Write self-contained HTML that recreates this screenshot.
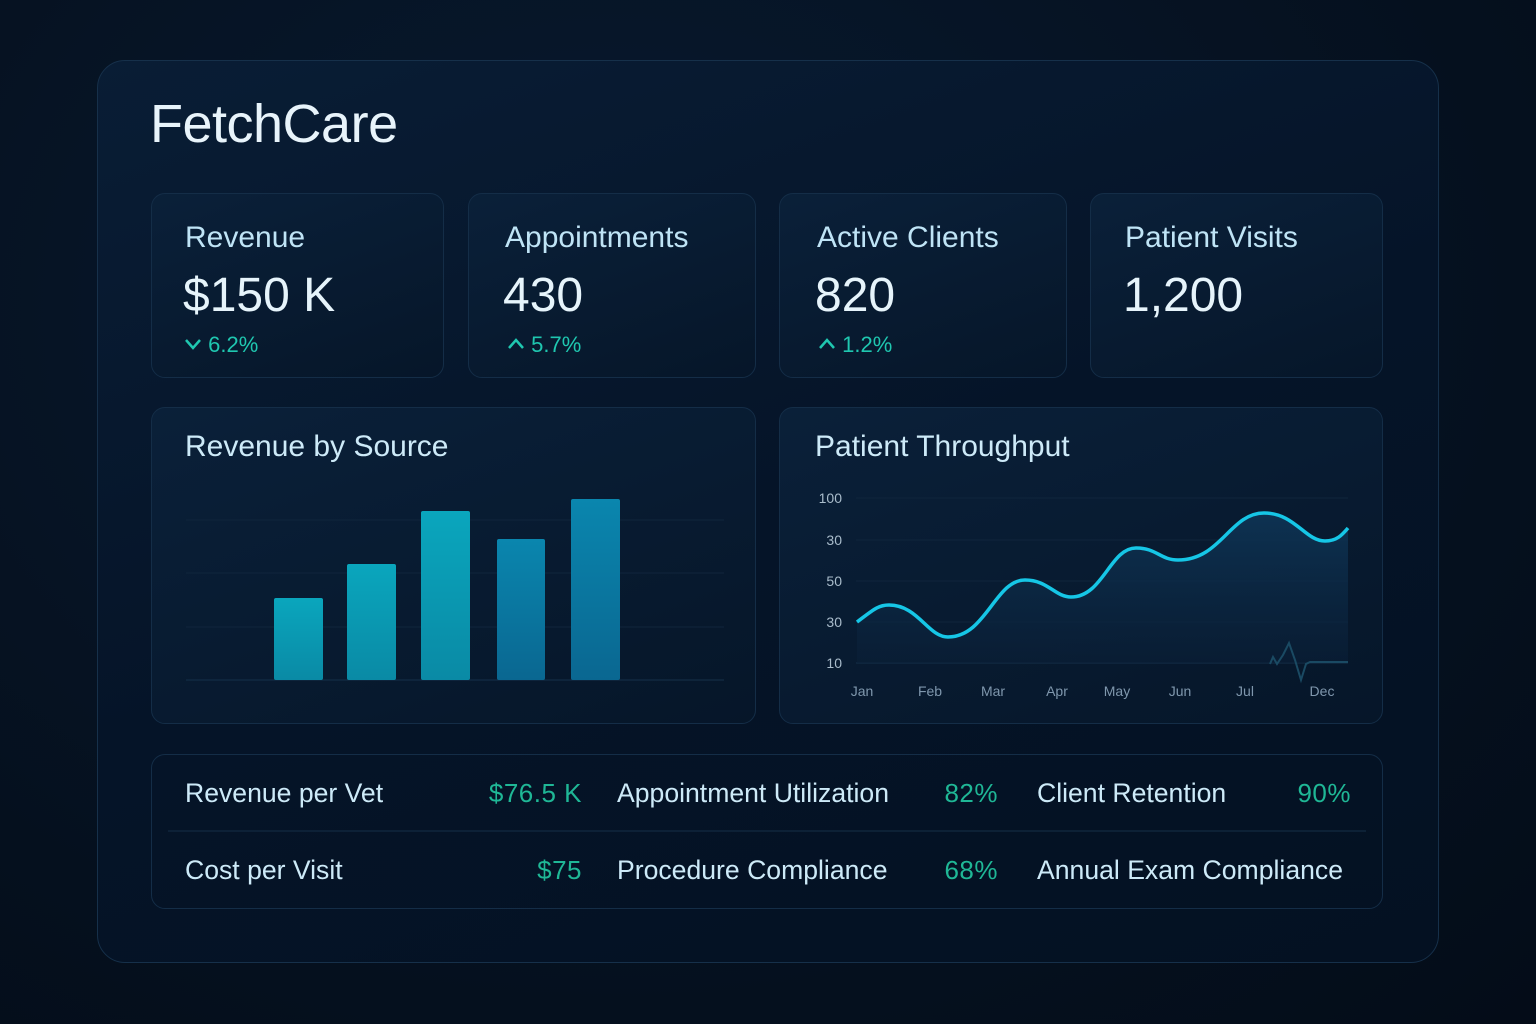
<!DOCTYPE html>
<html><head><meta charset="utf-8"><style>
*{margin:0;padding:0;box-sizing:border-box}
body{width:1536px;height:1024px;background:radial-gradient(ellipse at 40% 30%,#081a30 0%,#05101e 70%,#040c18 100%);font-family:"Liberation Sans",sans-serif;position:relative;overflow:hidden}
.a{position:absolute}
.outer{left:97px;top:60px;width:1342px;height:903px;border-radius:28px;background:linear-gradient(160deg,#091d35 0%,#051428 50%,#041122 100%);border:1px solid #16304a}
.card{border-radius:14px;border:1px solid #142d47;background:linear-gradient(160deg,#0a2039 0%,#061629 100%)}
.lbl{font-size:30px;color:#bfe4f6;white-space:nowrap}
.val{font-size:48px;color:#e6f4fb;white-space:nowrap}
.dl{font-size:22px;color:#1fc7b0;white-space:nowrap}
.t{font-size:26.6px;color:#cdeaf8;white-space:nowrap}
.g{font-size:26px;color:#1fb796;white-space:nowrap;text-align:right;letter-spacing:0.5px}
</style></head><body>
<div class="a outer"></div>
<div class="a" style="left:150px;top:93px;font-size:54px;color:#e8f4fb;letter-spacing:-0.5px">FetchCare</div>

<div class="a card" style="left:151px;top:193px;width:293px;height:185px"></div>
<div class="a card" style="left:468px;top:193px;width:288px;height:185px"></div>
<div class="a card" style="left:779px;top:193px;width:288px;height:185px"></div>
<div class="a card" style="left:1090px;top:193px;width:293px;height:185px"></div>

<div class="a lbl" style="left:185px;top:221px">Revenue</div>
<div class="a val" style="left:183px;top:268px">$150 K</div>
<div class="a dl" style="left:184px;top:332px"><svg width="18" height="14" style="vertical-align:1px"><path d="M2,3 L9,11 L16,3" stroke="#1fc7b0" stroke-width="2.5" fill="none"/></svg> 6.2%</div>

<div class="a lbl" style="left:505px;top:221px">Appointments</div>
<div class="a val" style="left:503px;top:268px">430</div>
<div class="a dl" style="left:507px;top:332px"><svg width="18" height="14" style="vertical-align:1px"><path d="M2,11 L9,3 L16,11" stroke="#1fc7b0" stroke-width="2.5" fill="none"/></svg> 5.7%</div>

<div class="a lbl" style="left:817px;top:221px">Active Clients</div>
<div class="a val" style="left:815px;top:268px">820</div>
<div class="a dl" style="left:818px;top:332px"><svg width="18" height="14" style="vertical-align:1px"><path d="M2,11 L9,3 L16,11" stroke="#1fc7b0" stroke-width="2.5" fill="none"/></svg> 1.2%</div>

<div class="a lbl" style="left:1125px;top:221px">Patient Visits</div>
<div class="a val" style="left:1123px;top:268px">1,200</div>

<div class="a card" style="left:151px;top:407px;width:605px;height:317px"></div>
<div class="a card" style="left:779px;top:407px;width:604px;height:317px"></div>
<div class="a lbl" style="left:185px;top:430px;color:#cdeaf8">Revenue by Source</div>
<div class="a lbl" style="left:815px;top:430px;color:#cdeaf8">Patient Throughput</div>

<svg class="a" style="left:0;top:0" width="1536" height="1024">
<defs>
<linearGradient id="b1" x1="0" y1="0" x2="0" y2="1"><stop offset="0" stop-color="#0aa6bd"/><stop offset="1" stop-color="#0a8aa5"/></linearGradient>
<linearGradient id="b2" x1="0" y1="0" x2="0" y2="1"><stop offset="0" stop-color="#0a86ae"/><stop offset="1" stop-color="#0a6791"/></linearGradient>
<linearGradient id="ar" x1="0" y1="0" x2="0" y2="1"><stop offset="0" stop-color="#0e3556" stop-opacity="0.9"/><stop offset="1" stop-color="#0a1f37" stop-opacity="0.6"/></linearGradient>
</defs>
<g stroke="#10253c" stroke-width="1">
<line x1="186" y1="520" x2="724" y2="520"/><line x1="186" y1="573" x2="724" y2="573"/><line x1="186" y1="627" x2="724" y2="627"/><line x1="186" y1="680" x2="724" y2="680" stroke="#15304a"/>
</g>
<rect x="274" y="598" width="49" height="82" rx="2" fill="url(#b1)"/>
<rect x="347" y="564" width="49" height="116" rx="2" fill="url(#b1)"/>
<rect x="421" y="511" width="49" height="169" rx="2" fill="url(#b1)"/>
<rect x="497" y="539" width="48" height="141" rx="2" fill="url(#b2)"/>
<rect x="571" y="499" width="49" height="181" rx="2" fill="url(#b2)"/>

<g stroke="#10253c" stroke-width="1">
<line x1="856" y1="498" x2="1348" y2="498"/><line x1="856" y1="540" x2="1348" y2="540"/><line x1="856" y1="581" x2="1348" y2="581"/><line x1="856" y1="622" x2="1348" y2="622"/><line x1="856" y1="663" x2="1348" y2="663" stroke="#15304a"/>
</g>
<path d="M857,622 C873,610 878,605 889,605 C918,605 928,637 948,637 C986,637 995,580 1025,580 C1048,580 1055,597 1071,597 C1103,597 1110,548 1136,548 C1157,548 1160,560 1178,560 C1221,560 1230,513 1264,513 C1295,513 1305,541 1325,541 C1337,541 1342,535 1348,528 L1348,663 L857,663 Z" fill="url(#ar)"/>
<path d="M857,622 C873,610 878,605 889,605 C918,605 928,637 948,637 C986,637 995,580 1025,580 C1048,580 1055,597 1071,597 C1103,597 1110,548 1136,548 C1157,548 1160,560 1178,560 C1221,560 1230,513 1264,513 C1295,513 1305,541 1325,541 C1337,541 1342,535 1348,528" fill="none" stroke="#16c6e6" stroke-width="3.5"/>
<path d="M1270,664 L1273,657 L1277,664 L1283,655 L1289,643 L1295,660 L1301,680 L1306,664 L1310,662 L1348,662" fill="none" stroke="#1a4a63" stroke-width="2"/>
<g fill="#a9bccb" font-family="Liberation Sans" font-size="14" text-anchor="end">
<text x="842" y="503">100</text><text x="842" y="545">30</text><text x="842" y="586">50</text><text x="842" y="627">30</text><text x="842" y="668">10</text>
</g>
<g fill="#7f97ad" font-family="Liberation Sans" font-size="14" text-anchor="middle">
<text x="862" y="696">Jan</text><text x="930" y="696">Feb</text><text x="993" y="696">Mar</text><text x="1057" y="696">Apr</text><text x="1117" y="696">May</text><text x="1180" y="696">Jun</text><text x="1245" y="696">Jul</text><text x="1322" y="696">Dec</text>
</g>
<line x1="168" y1="831" x2="1366" y2="831" stroke="#10263d" stroke-width="1.5"/>
</svg>

<div class="a card" style="left:151px;top:754px;width:1232px;height:155px;background:transparent"></div>
<div class="a t" style="left:185px;top:778px">Revenue per Vet</div>
<div class="a g" style="left:432px;top:778px;width:150px">$76.5 K</div>
<div class="a t" style="left:617px;top:778px">Appointment Utilization</div>
<div class="a g" style="left:898px;top:778px;width:100px">82%</div>
<div class="a t" style="left:1037px;top:778px">Client Retention</div>
<div class="a g" style="left:1251px;top:778px;width:100px">90%</div>

<div class="a t" style="left:185px;top:855px">Cost per Visit</div>
<div class="a g" style="left:432px;top:855px;width:150px">$75</div>
<div class="a t" style="left:617px;top:855px">Procedure Compliance</div>
<div class="a g" style="left:898px;top:855px;width:100px">68%</div>
<div class="a t" style="left:1037px;top:855px">Annual Exam Compliance</div>
</body></html>
